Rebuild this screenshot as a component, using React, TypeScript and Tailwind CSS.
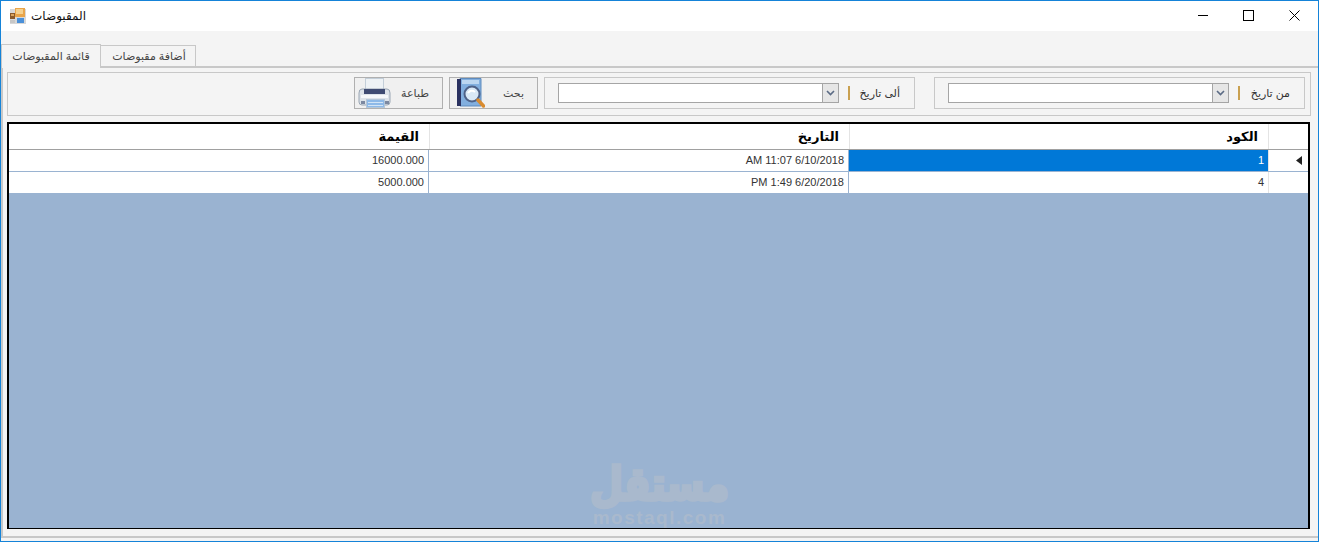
import React from "react";

const ARABIC = "font-['Liberation_Sans','DejaVu_Sans',sans-serif]";

function AppIcon() {
  return (
    <svg width="16" height="16" viewBox="0 0 16 16" className="block">
      <rect x="0" y="1" width="16" height="15" fill="#d8d8d8" />
      <rect x="5" y="0" width="10" height="9" fill="#e9a54a" />
      <rect x="6" y="1" width="7" height="5" fill="#f5d18f" />
      <rect x="0" y="5" width="5" height="6" fill="#8a5a2b" />
      <rect x="1" y="6" width="3" height="2" fill="#d9a45f" />
      <rect x="7" y="10" width="7" height="5" fill="#4a90d9" />
      <rect x="0" y="12" width="5" height="3" fill="#c7c7c7" />
    </svg>
  );
}

function PrinterIcon() {
  return (
    <svg width="33" height="30" viewBox="0 0 33 30" className="block">
      <rect x="7.5" y="0.5" width="18" height="13" fill="#eef2f5" stroke="#c3ced8" />
      <path d="M4 11 H29 Q32 11 32 15 V24 Q32 27 29 27 H4 Q1 27 1 24 V15 Q1 11 4 11Z" fill="#dde3e9" stroke="#9aa6b4" />
      <rect x="6" y="11" width="21" height="5" fill="#3f4b72" />
      <rect x="3" y="17" width="27" height="3" fill="#f6f8fa" />
      <rect x="8.5" y="21.5" width="18" height="8" fill="#8db9e8" stroke="#b4c6d8" />
      <rect x="10" y="24" width="15" height="1" fill="#d2e4f6" />
      <rect x="10" y="27" width="15" height="1" fill="#d2e4f6" />
      <rect x="3" y="23" width="4" height="3" fill="#7c88a0" />
      <rect x="27" y="23" width="4" height="3" fill="#7c88a0" />
    </svg>
  );
}

function SearchBookIcon() {
  return (
    <svg width="28" height="30" viewBox="0 0 28 30" className="block">
      <path d="M3 0.5 H24 V28 H3Z" fill="#82afdf" stroke="#5f8bbd" />
      <rect x="0" y="1" width="4" height="27" fill="#2b3260" />
      <rect x="5" y="2" width="17" height="4" fill="#bcd6f0" />
      <circle cx="15" cy="16" r="7.5" fill="#d9e8f6" stroke="#4f6288" strokeWidth="2" />
      <path d="M11 15 Q14 11 18 14" stroke="#ffffff" strokeWidth="2" fill="none" />
      <path d="M21 22 L26.5 28" stroke="#d98b2f" strokeWidth="3.5" strokeLinecap="round" />
    </svg>
  );
}

function DateField({ label, width }: { label: string; width: string }) {
  return (
    <div className={`flex h-[32px] ${width} items-center border border-[#c8c8c8]`}>
      <div className="ml-[13px] flex h-[20px] w-[281px] border border-[#a5a5a5] bg-white">
        <div className="flex-1" />
        <div className="flex w-[16px] items-center justify-center border-l border-[#a5a5a5] bg-[#e6e6e6]">
          <svg width="9" height="6" viewBox="0 0 9 6" className="block">
            <path d="M1 1 L4.5 4.5 L8 1" stroke="#5b6b85" strokeWidth="1.6" fill="none" />
          </svg>
        </div>
      </div>
      <div className="ml-[9px] h-[14px] w-[2px] bg-[#c9a050]" />
      <div dir="rtl" className={`flex-1 pr-[14px] text-[11px] leading-none text-[#333] ${ARABIC}`}>
        {label}
      </div>
    </div>
  );
}

function ToolButton({ label, icon, pad }: { label: string; icon: React.ReactNode; pad: string }) {
  return (
    <div className={`flex h-[32px] w-[89px] items-center justify-between border border-[#b0b0b0] bg-[#f0f0f0] pr-[13px] ${pad}`}>
      {icon}
      <span dir="rtl" className={`text-[11px] text-[#444] ${ARABIC}`}>
        {label}
      </span>
    </div>
  );
}

function HeaderCell({ label, className }: { label: string; className: string }) {
  return (
    <div
      dir="rtl"
      className={`flex h-full items-center border-l border-[#e4e4e4] pr-[10px] text-[13px] font-bold text-black ${ARABIC} ${className}`}
    >
      {label}
    </div>
  );
}

function Row({ id, date, value, selected }: { id: string; date: string; value: string; selected?: boolean }) {
  const cell =
    "flex h-full items-center justify-end pr-[4px] text-[11px] font-['Liberation_Sans',sans-serif] text-[#333]";
  return (
    <div className="flex h-[22px] border-b border-[#9ab3d1] bg-white">
      <div className={`${cell} w-[420px] border-r border-[#9ab3d1]`}>{value}</div>
      <div className={`${cell} w-[420px] border-r border-[#9ab3d1]`}>{date}</div>
      <div className={`${cell} w-[419px] ${selected ? "bg-[#0078d7] text-white" : ""}`}>{id}</div>
      <div className="flex h-full flex-1 items-center justify-end border-l border-[#e4e4e4] pr-[6px]">
        {selected && (
          <svg width="6" height="9" viewBox="0 0 6 9" className="block">
            <path d="M6 0 V9 L0 4.5Z" fill="#222" />
          </svg>
        )}
      </div>
    </div>
  );
}

export default function App() {
  return (
    <div className="flex h-[542px] w-[1319px] flex-col overflow-hidden border border-[#1583d8] bg-[#f4f4f4]">
      {/* title bar */}
      <div className="flex h-[30px] flex-none items-center bg-white">
        <div className="ml-[9px] flex items-center gap-[5px]">
          <AppIcon />
          <span dir="rtl" className={`text-[12px] text-[#111] ${ARABIC}`}>
            المقبوضات
          </span>
        </div>
        <div className="mb-[2px] ml-auto flex items-center">
          <svg width="10" height="10" viewBox="0 0 10 10" className="mr-[35px] block">
            <path d="M0 5.5 H10" stroke="#000" strokeWidth="1" />
          </svg>
          <svg width="11" height="11" viewBox="0 0 11 11" className="mr-[35px] block">
            <rect x="0.5" y="0.5" width="10" height="10" fill="none" stroke="#000" strokeWidth="1" />
          </svg>
          <svg width="11" height="11" viewBox="0 0 11 11" className="mr-[18px] block">
            <path d="M0.5 0.5 L10.5 10.5 M10.5 0.5 L0.5 10.5" stroke="#000" strokeWidth="1" />
          </svg>
        </div>
      </div>

      {/* tabs */}
      <div className="relative mt-[13px] flex h-[24px] flex-none items-end border-b-2 border-[#c8c8c8]">
        <div
          dir="rtl"
          className={`relative z-10 -mb-[2px] flex h-[24px] w-[100px] items-center justify-center border border-b-0 border-[#c8c8c8] bg-[#f4f4f4] text-[11px] text-[#444] ${ARABIC}`}
        >
          قائمة المقبوضات
        </div>
        <div
          dir="rtl"
          className={`flex h-[21px] w-[95px] items-center justify-center border border-b-0 border-l-0 border-[#c8c8c8] bg-[#f4f4f4] pl-[2px] text-[11px] text-[#444] ${ARABIC}`}
        >
          أضافة مقبوضات
        </div>
      </div>

      {/* page */}
      <div className="mb-[3px] flex min-h-0 flex-1 flex-col border-b-2 border-l-2 border-[#c8c8c8] pb-[7px] pl-[4px] pr-[7px] pt-[4px]">
        <div className="flex h-[44px] flex-none items-center justify-end gap-[6px] border border-[#c8c8c8] pb-[2px] pr-[5px]">
          <ToolButton label="طباعة" icon={<PrinterIcon />} pad="pl-[3px]" />
          <ToolButton label="بحث" icon={<SearchBookIcon />} pad="pl-[7px]" />
          <DateField label="ألى تاريخ" width="w-[371px]" />
          <div className="w-[7px]" />
          <DateField label="من تاريخ" width="w-[371px]" />
        </div>

        {/* grid */}
        <div className="relative mr-[1px] mt-[6px] flex min-h-0 flex-1 flex-col overflow-hidden border-b-1 border-l-2 border-r-2 border-t-2 border-black bg-[#9ab3d1]">
          <div className="flex h-[26px] flex-none border-b border-[#a0a0a0] bg-white">
            <HeaderCell label="القيمة" className="w-[420px] border-l-0" />
            <HeaderCell label="التاريخ" className="w-[420px]" />
            <HeaderCell label="الكود" className="w-[419px]" />
            <div className="h-full flex-1 border-l border-[#e4e4e4]" />
          </div>
          <Row id="1" date="AM 11:07 6/10/2018" value="16000.000" selected />
          <Row id="4" date="PM 1:49 6/20/2018" value="5000.000" />
          <div className="absolute bottom-[-2px] left-[580px] flex w-[141px] flex-col items-center text-[#a9b9cd]">
            <span
              dir="rtl"
              className="origin-center scale-y-120 whitespace-nowrap font-['DejaVu_Sans',sans-serif] text-[38px] font-bold leading-[44px] [-webkit-text-stroke:3px_#a9b9cd]"
            >
              مستقل
            </span>
            <span className="whitespace-nowrap font-['Liberation_Sans',sans-serif] text-[19px] font-bold leading-[24px] tracking-[1.5px]">
              mostaql.com
            </span>
          </div>
        </div>
      </div>
    </div>
  );
}
